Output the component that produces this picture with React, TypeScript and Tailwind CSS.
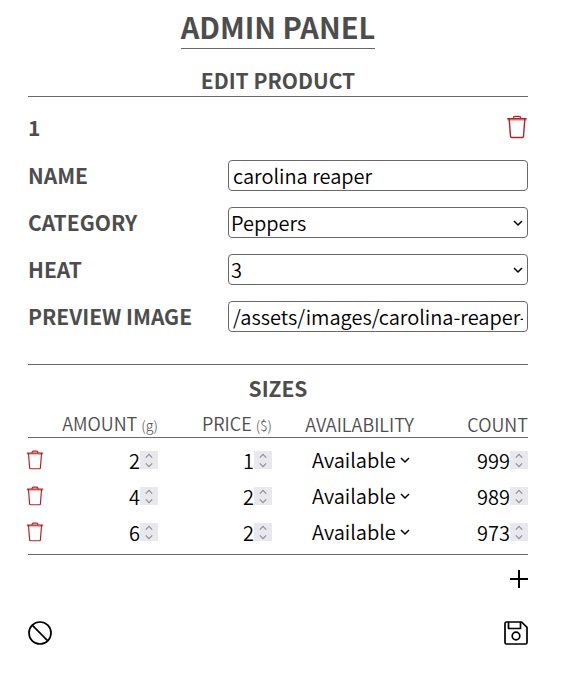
import React, { useState } from 'react';

type Size = { id: number; amount: number; price: number; available: string; count: number };

const initialSizes: Size[] = [
  { id: 1, amount: 2, price: 1, available: 'Available', count: 999 },
  { id: 2, amount: 4, price: 2, available: 'Available', count: 989 },
  { id: 3, amount: 6, price: 2, available: 'Available', count: 973 },
];

function TrashIcon({ className }: { className: string }) {
  return (
    <svg viewBox="0 0 20 24" fill="none" stroke="#b22222" strokeWidth="1.4" strokeLinejoin="round" strokeLinecap="round" className={className} aria-hidden="true">
      <path d="M.8 3.8h18.4M2.2 4.2l1.300 17.2q.1 1.100 1.200 1.100h10.600q1.100 0 1.200-1.100l1.300-17.2M6.400 3.600V3q0-1.600 1.600-1.600h4q1.600 0 1.600 1.600v.6" />
      <path d="M1.200 5h17.600" strokeOpacity=".4" />
    </svg>
  );
}

function Chevron({ className }: { className: string }) {
  return (
    <svg viewBox="0 0 10 10" fill="none" stroke="currentColor" strokeWidth="1.5" className={className} aria-hidden="true">
      <path d="M1 3l4 4 4-4" />
    </svg>
  );
}

function NumberField({ label, value, onChange }: { label: string; value: number; onChange: (n: number) => void }) {
  return (
    <div className="flex items-center justify-end">
      <input
        type="number"
        aria-label={label}
        value={value}
        onChange={(e) => onChange(Number(e.target.value))}
        className="h-8 w-16 min-w-0 appearance-none bg-transparent text-right text-[20px] font-[350] text-black outline-none [-moz-appearance:textfield] [&::-webkit-inner-spin-button]:appearance-none"
      />
      <span className="flex h-[18px] w-[18px] shrink-0 flex-col items-center justify-center gap-px bg-[#e9e9ed] text-[#8f8f9d]">
        <button type="button" aria-label={`Increase ${label}`} onClick={() => onChange(value + 1)}>
          <Chevron className="block h-2 w-2 rotate-180" />
        </button>
        <button type="button" aria-label={`Decrease ${label}`} onClick={() => onChange(value - 1)}>
          <Chevron className="block h-2 w-2" />
        </button>
      </span>
    </div>
  );
}

const fieldClass = 'h-[31px] w-full rounded border border-[#696969] bg-white text-[20px] leading-7 font-[350] text-black outline-none';
const labelClass = 'text-[21px] leading-[31px] font-bold';

function SelectField({ id, label, options, initial }: { id: string; label: string; options: string[]; initial: string }) {
  return (
    <>
      <label htmlFor={id} className={labelClass}>{label}</label>
      <div className="grid items-center">
        <select id={id} defaultValue={initial} className={`${fieldClass} col-start-1 row-start-1 appearance-none px-0.5`}>
          {options.map((o) => <option key={o}>{o}</option>)}
        </select>
        <Chevron className="pointer-events-none col-start-1 row-start-1 mr-[5px] h-2.5 w-2.5 justify-self-end text-black" />
      </div>
    </>
  );
}

export default function App() {
  const [sizes, setSizes] = useState(initialSizes);
  const update = (id: number, patch: Partial<Size>) =>
    setSizes((all) => all.map((s) => (s.id === id ? { ...s, ...patch } : s)));

  return (
    <main className="bg-white pr-[38px] pl-7 font-['Noto_Sans_CJK_SC',sans-serif] text-[#4d4d4d]">
      <header className="flex justify-center pt-1.5">
        <h1 className="border-b border-[#696969] pb-0.5 text-[29px] leading-10 font-bold">ADMIN PANEL</h1>
      </header>
      <form onSubmit={(e) => e.preventDefault()}>
        <h2 className="mt-4 border-b border-[#696969] text-center text-[21px] leading-[31px] font-bold">EDIT PRODUCT</h2>

        <div className="mt-[14px] flex h-8 items-center justify-between">
          <span className="pt-0.5 text-[21px] font-bold">1</span>
          <button type="button" aria-label="Delete product">
            <TrashIcon className="block h-6 w-[22px]" />
          </button>
        </div>

        <div className="mt-[17px] grid grid-cols-[2fr_3fr] gap-y-4">
          <label htmlFor="name" className={labelClass}>NAME</label>
          <input id="name" type="text" defaultValue="carolina reaper" className={`${fieldClass} px-1`} />
          <SelectField id="category" label="CATEGORY" options={['Peppers', 'Sauces', 'Seeds']} initial="Peppers" />
          <SelectField id="heat" label="HEAT" options={['1', '2', '3']} initial="3" />
          <label htmlFor="preview" className={labelClass}>PREVIEW IMAGE</label>
          <input id="preview" type="text" defaultValue="/assets/images/carolina-reaper-preview.png" className={`${fieldClass} px-1`} />
        </div>

        <section className="mt-8 border-t border-[#696969] pt-2">
          <h3 className="text-center text-[21px] leading-[31px] font-bold">SIZES</h3>
          <table className="mt-2 w-full table-fixed border-separate border-spacing-0 border-b border-[#696969] pb-1">
            <thead>
              <tr className="text-right text-[18px] leading-[23px] *:border-b *:border-[#696969] *:p-0 *:font-[350]">
                <td className="w-4" />
                <th scope="col" className="text-right">AMOUNT <span className="text-[14px] font-light">(g)</span></th>
                <th scope="col" className="text-right">PRICE <span className="text-[14px] font-light">($)</span></th>
                <th scope="col" className="w-[142px] text-right">AVAILABILITY</th>
                <th scope="col" className="text-right">COUNT</th>
              </tr>
            </thead>
            <tbody>
              {sizes.map((s) => (
                <tr key={s.id} className="h-9 *:p-0 first:h-10 first:*:pt-1">
                  <td>
                    <button type="button" aria-label={`Delete size ${s.amount} g`} onClick={() => setSizes(sizes.filter((x) => x.id !== s.id))} className="-ml-0.5 block">
                      <TrashIcon className="block h-5 w-[18px]" />
                    </button>
                  </td>
                  <td><NumberField label="Amount" value={s.amount} onChange={(amount) => update(s.id, { amount })} /></td>
                  <td><NumberField label="Price" value={s.price} onChange={(price) => update(s.id, { price })} /></td>
                  <td>
                    <div className="flex items-center justify-end pr-1 text-black">
                      <select aria-label="Availability" value={s.available} onChange={(e) => update(s.id, { available: e.target.value })} className="-mr-3.5 h-8 appearance-none bg-transparent pr-[18px] text-[20px] font-[350] outline-none">
                        <option>Available</option>
                        <option>Sold out</option>
                      </select>
                      <Chevron className="pointer-events-none h-2.5 w-2.5" />
                    </div>
                  </td>
                  <td><NumberField label="Count" value={s.count} onChange={(count) => update(s.id, { count })} /></td>
                </tr>
              ))}
            </tbody>
          </table>
          <div className="mt-[15px] flex justify-end">
            <button
              type="button"
              aria-label="Add size"
              onClick={() => setSizes([...sizes, { id: Date.now(), amount: 0, price: 0, available: 'Available', count: 0 }])}
              className="text-black"
            >
              <svg viewBox="0 0 18 18" stroke="currentColor" strokeWidth="2" className="block h-[18px] w-[18px]" aria-hidden="true">
                <path d="M9 0v18M0 9h18" />
              </svg>
            </button>
          </div>
        </section>

        <footer className="mt-[33px] flex justify-between pb-8 text-black">
          <button type="button" aria-label="Cancel">
            <svg viewBox="0 0 24 24" fill="none" stroke="currentColor" strokeWidth="1.7" className="block h-6 w-6" aria-hidden="true">
              <circle cx="12" cy="12" r="11" />
              <path d="M4.2 4.2l15.6 15.6" />
            </svg>
          </button>
          <button type="submit" aria-label="Save">
            <svg viewBox="0 0 24 24" fill="none" stroke="currentColor" strokeWidth="1.7" strokeLinejoin="round" className="block h-6 w-6" aria-hidden="true">
              <path d="M2.4 1h15.2L23 6.4v15.2q0 1.4-1.4 1.4H2.4Q1 23 1 21.600V2.400Q1 1 2.400 1z" />
              <path d="M4.500 1v6.500h12V1" />
              <circle cx="12" cy="15" r="3.800" />
            </svg>
          </button>
        </footer>
      </form>
    </main>
  );
}
